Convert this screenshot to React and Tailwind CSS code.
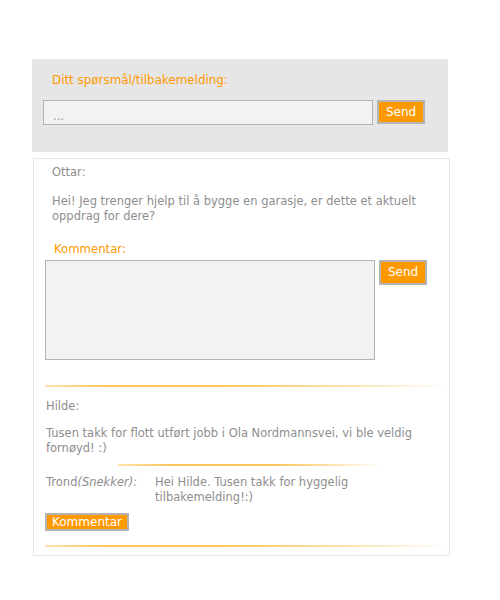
export default function App() {
  const font = { fontFamily: '"DejaVu Sans", "Noto Sans", sans-serif' };
  return (
    <div className="w-[500px] h-[600px] bg-white pt-[59px] pl-[32px] text-[11.5px] leading-[15px]" style={font}>
      <div className="w-[416px] h-[93px] bg-[#e6e6e6] pt-[13px]">
        <div className="pl-[20px] leading-[16px] text-[11.9px] text-[#ff9900]">Ditt spørsmål/tilbakemelding:</div>
        <div className="flex items-start gap-[4px] pl-[11px] mt-[12px]">
          <div className="w-[330px] h-[25px] bg-[#f2f2f2] border border-[#b3b3b3] pl-[9px] pt-[7px] leading-[16px] text-[#999]">...</div>
          <button className="w-[48px] h-[24px] bg-[#ff9900] border-2 border-[#b3b3b3] text-white leading-[18px] text-[12px]">Send</button>
        </div>
      </div>

      <div className="ml-px mt-[6px] w-[417px] h-[398px] border border-[#e6e6e6] bg-white text-[#8e8e8e]">
        <div className="pl-[18px] pt-[5px] leading-[16px]">Ottar:</div>
        <div className="pl-[18px] mt-[14px] whitespace-nowrap">
          Hei! Jeg trenger hjelp til å bygge en garasje, er dette et aktuelt
          <br />
          oppdrag for dere?
        </div>
        <div className="pl-[20px] mt-[17px] leading-[16px] text-[11.7px] text-[#ff9900]">Kommentar:</div>
        <div className="flex items-start gap-[4px] pl-[11px] mt-[3px]">
          <div className="w-[330px] h-[100px] bg-[#f2f2f2] border border-[#b3b3b3]"></div>
          <button className="w-[48px] h-[25px] bg-[#ff9900] border-2 border-[#b3b3b3] text-white leading-[19px] text-[12px]">Send</button>
        </div>
        <div className="ml-[11px] mt-[25px] h-[2px] bg-[linear-gradient(to_right,#fde3ac_0%,#fcc65c_15%,#fcc65c_45%,#fde7bb_80%,#ffffff_100%)]"></div>
        <div className="pl-[12px] mt-[11px] leading-[16px]">Hilde:</div>
        <div className="pl-[12px] mt-[12px] whitespace-nowrap">
          Tusen takk for flott utført jobb i Ola Nordmannsvei, vi ble veldig
          <br />
          fornøyd! :)
        </div>
        <div className="ml-[84px] mt-[8px] w-[262px] h-[2px] bg-[linear-gradient(to_right,#fde3ac_0%,#fcc65c_20%,#fcc65c_60%,#fde7bb_85%,#ffffff_100%)]"></div>
        <div className="flex pl-[12px] mt-[9px]">
          <div className="w-[109px] whitespace-nowrap">
            Trond<span className="italic">(Snekker):</span>
          </div>
          <div className="whitespace-nowrap">
            Hei Hilde. Tusen takk for hyggelig
            <br />
            tilbakemelding!:)
          </div>
        </div>
        <div className="pl-[11px] mt-[8px]">
          <button className="w-[84px] h-[18px] bg-[#ff9900] border-2 border-[#b3b3b3] text-white leading-[13px] text-[12px]">Kommentar</button>
        </div>
        <div className="ml-[11px] mt-[14px] h-[2px] bg-[linear-gradient(to_right,#fde3ac_0%,#fcc65c_15%,#fcc65c_45%,#fde7bb_80%,#ffffff_100%)]"></div>
      </div>
    </div>
  );
}
